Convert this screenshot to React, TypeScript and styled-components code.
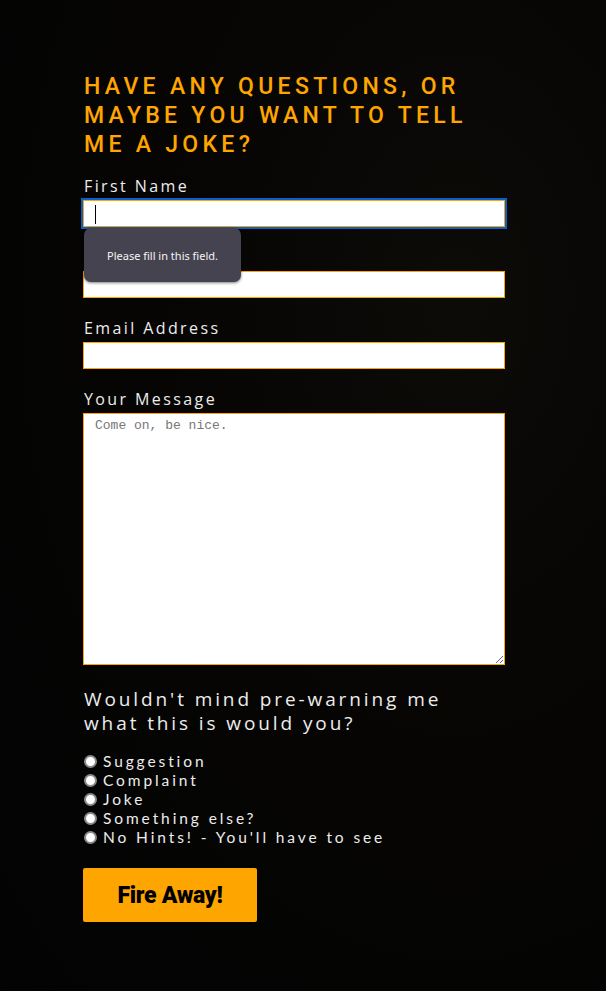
import styled, { createGlobalStyle } from "styled-components";

const GlobalStyle = createGlobalStyle`
  html, body {
    margin: 0;
    padding: 0;
    background: #050403;
  }
`;

const options = [
  "Suggestion",
  "Complaint",
  "Joke",
  "Something else?",
  "No Hints! - You'll have to see",
];

function App() {
  return (
    <>
      <GlobalStyle />
      <Page>
        <Form onSubmit={(e) => e.preventDefault()}>
          <Heading>
            Have any questions, or maybe you want to tell me a joke?
          </Heading>

          <Field>
            <Label htmlFor="first">First Name</Label>
            <InputWrap>
              <TextInput id="first" type="text" $focused />
              <Caret />
              <Bubble>Please fill in this field.</Bubble>
            </InputWrap>
          </Field>

          <Field>
            <Label htmlFor="last">Last Name</Label>
            <TextInput id="last" type="text" />
          </Field>

          <Field>
            <Label htmlFor="email">Email Address</Label>
            <TextInput id="email" type="email" />
          </Field>

          <Field>
            <Label htmlFor="msg">Your Message</Label>
            <MessageBox id="msg" placeholder="Come on, be nice." />
          </Field>

          <Question>Wouldn't mind pre-warning me what this is would you?</Question>

          <RadioList>
            {options.map((opt) => (
              <RadioRow key={opt}>
                <Radio type="radio" name="kind" value={opt} />
                {opt}
              </RadioRow>
            ))}
          </RadioList>

          <FireButton type="submit">Fire Away!</FireButton>
        </Form>
      </Page>
    </>
  );
}

export default App;

const Page = styled.div`
  min-height: 991px;
  padding: 72px 0 60px 83px;
  box-sizing: border-box;
  background: radial-gradient(
    ellipse at 75% 30%,
    #0d0b08 0%,
    #060504 45%,
    #030303 100%
  );
`;

const Form = styled.form`
  width: 422px;
  display: flex;
  flex-direction: column;
`;

const Heading = styled.h1`
  margin: 0 0 17px 1px;
  max-width: 400px;
  font-family: "Roboto", "Liberation Sans", sans-serif;
  font-weight: 500;
  font-size: 23px;
  line-height: 29px;
  letter-spacing: 4.3px;
  text-transform: uppercase;
  color: #ffa500;
`;

const Field = styled.div`
  display: flex;
  flex-direction: column;
  margin-bottom: 20px;
`;

const Label = styled.label`
  font-family: "Open Sans", "Liberation Sans", sans-serif;
  font-size: 16px;
  line-height: 20px;
  padding: 0 0 4px 1px;
  letter-spacing: 2.4px;
  color: #ececec;
`;

const InputWrap = styled.div`
  position: relative;
`;

const TextInput = styled.input<{ $focused?: boolean }>`
  display: block;
  width: 100%;
  height: 27px;
  box-sizing: border-box;
  margin: 0;
  border: 1px solid #ffa500;
  background: #fff;
  outline: ${(p) => (p.$focused ? "2px solid #0a5fd0" : "none")};
  outline-offset: 0;
  border-radius: 0;
  box-shadow: ${(p) => (p.$focused ? "0 0 0 1px #fff inset" : "none")};
`;

const Caret = styled.span`
  position: absolute;
  left: 12px;
  top: 5px;
  width: 1px;
  height: 19px;
  background: #000;
`;

const Bubble = styled.div`
  position: absolute;
  left: 1px;
  top: 28px;
  width: 157px;
  height: 54px;
  box-sizing: border-box;
  display: flex;
  align-items: center;
  justify-content: center;
  background: #45434f;
  border-radius: 7px;
  box-shadow: 0 1px 3px rgba(0, 0, 0, 0.5);
  font-family: "Noto Sans", "Liberation Sans", sans-serif;
  font-size: 11px;
  color: #f4f4f4;
  z-index: 2;
`;

const MessageBox = styled.textarea`
  display: block;
  width: 100%;
  height: 252px;
  box-sizing: border-box;
  margin: 0;
  padding: 4px 11px;
  border: 1px solid #ffa500;
  border-radius: 0;
  background: #fff;
  font-family: "Liberation Mono", monospace;
  font-size: 13px;
  resize: vertical;
  outline: none;

  &::placeholder {
    color: #777;
  }
`;

const Question = styled.p`
  margin: 2px 0 17px 1px;
  max-width: 380px;
  font-family: "Open Sans", "Liberation Sans", sans-serif;
  font-size: 19px;
  line-height: 24px;
  letter-spacing: 2.9px;
  color: #ececec;
`;

const RadioList = styled.div`
  display: flex;
  flex-direction: column;
  margin-bottom: 21px;
`;

const RadioRow = styled.label`
  display: flex;
  align-items: center;
  gap: 6px;
  height: 19px;
  font-family: "Lato", "Liberation Sans", sans-serif;
  font-size: 15.5px;
  line-height: 19px;
  letter-spacing: 2.9px;
  color: #ececec;
`;

const Radio = styled.input`
  appearance: none;
  width: 13px;
  height: 13px;
  margin: 0 0 0 1px;
  border-radius: 50%;
  background: #fff;
  border: 2px solid #8a8a8a;
  box-sizing: border-box;
`;

const FireButton = styled.button`
  width: 174px;
  height: 54px;
  border: none;
  border-radius: 2px;
  background: #ffa500;
  color: #000;
  font-family: "Roboto", "Liberation Sans", sans-serif;
  font-weight: 900;
  font-size: 23px;
  letter-spacing: -0.3px;
  cursor: pointer;
`;
